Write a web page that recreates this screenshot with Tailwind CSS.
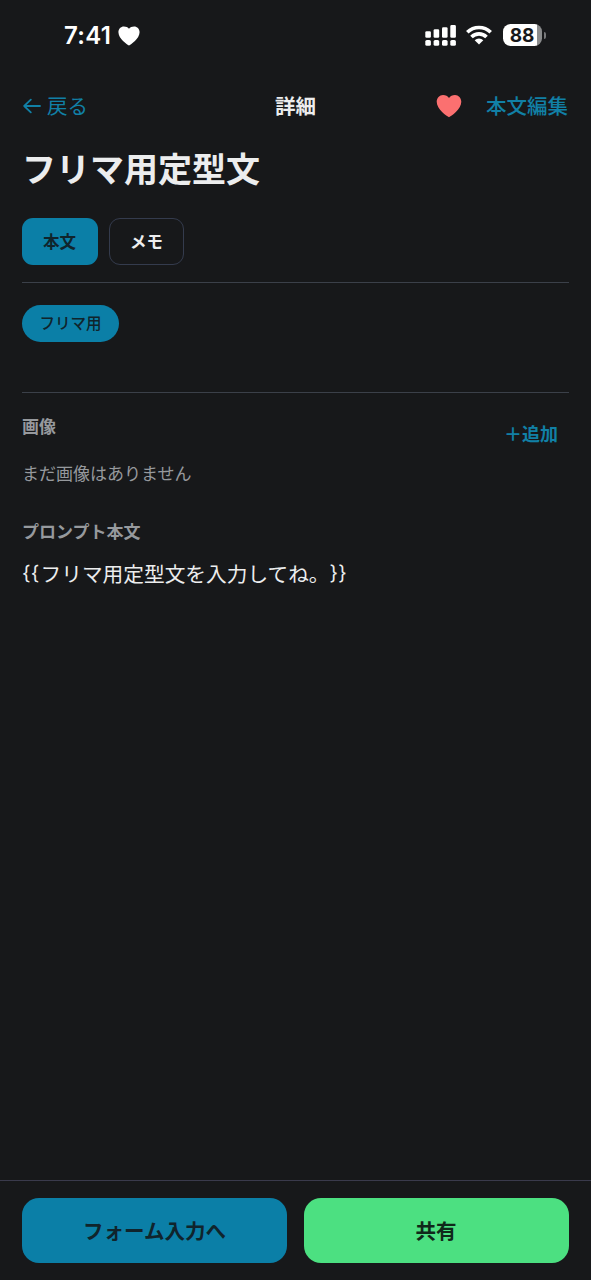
<!DOCTYPE html>
<html lang="ja">
<head>
<meta charset="utf-8">
<title>詳細</title>
<script src="https://cdn.jsdelivr.net/npm/@tailwindcss/browser@4"></script>
</head>
<body class="bg-[#17181a]">
<div class="flex h-[1280px] w-[591px] flex-col overflow-hidden whitespace-nowrap bg-[#17181a] font-['Noto_Sans_CJK_JP',sans-serif] text-[#ecedee] [text-spacing-trim:space-all]">
  <!-- status bar -->
  <div class="flex h-[70px] items-center pl-16 pr-[45px] text-white">
    <span class="w-[49px] pt-px font-['Inter',sans-serif] text-[24px] font-semibold leading-[70px] tracking-[0.3px]">7:41</span>
    <svg class="ml-[5px] mt-px h-[20px] w-[22px]" viewBox="0 0 21 20" preserveAspectRatio="none" fill="currentColor"><path d="M10.5 19.500C8.8 18.600.4 12.700.4 6.300.4 3 2.700.6 5.600.6c2.100 0 3.900.8 4.900 2.100 1-1.300 2.800-2.100 4.900-2.100 2.900 0 5.200 2.400 5.200 5.700 0 6.400-8.400 12.300-10.100 13.200z"/></svg>
    <div class="ml-auto flex items-center">
      <svg class="h-[21px] w-[31px]" viewBox="0 0 31 21" fill="currentColor">
        <rect x=".3" y="6.300" width="5.600" height="6.400" rx="1.300"/><rect x="8.600" y="4.300" width="5.600" height="8.400" rx="1.300"/><rect x="17" y="2.300" width="5.600" height="10.400" rx="1.300"/><rect x="25.300" y=".1" width="5.600" height="12.600" rx="1.300"/>
        <rect x=".3" y="15" width="5.600" height="5.800" rx="1.600"/><rect x="8.600" y="15" width="5.600" height="5.800" rx="1.600"/><rect x="17" y="15" width="5.600" height="5.800" rx="1.600"/><rect x="25.300" y="15" width="5.600" height="5.800" rx="1.600"/>
      </svg>
      <svg class="ml-[10px] h-[20px] w-[26px]" viewBox="0 0 26 20" fill="none" stroke="currentColor" stroke-width="3.600"><path d="M1.300 7.200a16.800 16.800 0 0 1 23.400 0M5.500 12a10.600 10.600 0 0 1 15 0"/><path d="M13 19.600l-4.300-4.300a6 6 0 0 1 8.600 0z" fill="currentColor" stroke="none"/></svg>
      <div class="ml-[11px] flex h-[22px] w-[39px] items-center justify-center rounded-[7.500px] bg-linear-to-r from-white from-[88%] to-[#8b8c8d] to-[88%] pr-px font-['Inter',sans-serif] text-[19px] font-bold leading-none text-[#17181a]">88</div>
      <div class="ml-[1.500px] h-[7px] w-[2.500px] rounded-r-full bg-[#77787a]"></div>
    </div>
  </div>
  <!-- navigation -->
  <div class="grid h-[72px] grid-cols-[1fr_auto_1fr] items-center px-[22px] pb-[2px] text-[20.5px] leading-[30px]">
    <div class="flex items-center text-[#1180a6]">
      <svg class="ml-px mr-[6px] mt-[2px] h-[16px] w-[18px]" viewBox="0 0 18 16" fill="none" stroke="currentColor" stroke-width="1.800" stroke-linecap="round" stroke-linejoin="round"><path d="M17 8H1.500M7.800 1.700L1.200 8l6.600 6.300"/></svg>
      <span>戻る</span>
    </div>
    <div class="font-bold">詳細</div>
    <div class="flex items-center justify-end pr-px text-[#1180a6]">
      <svg class="mr-[24px] mt-[2px] h-[24px] w-[26px] text-[#fb7070]" viewBox="0 0 26 24" fill="currentColor"><path d="M13 23.300C11 22.300.7 15.500.7 7.800.7 3.800 3.500.9 7 .9c2.600 0 4.800 1.100 6 3 1.200-1.900 3.400-3 6-3 3.500 0 6.300 2.900 6.300 6.900 0 7.700-10.300 14.500-12.300 15.500z"/></svg>
      <span class="font-medium">本文編集</span>
    </div>
  </div>
  <main class="flex flex-1 flex-col px-[22px]">
    <h1 class="h-[76px] text-[34px] font-bold leading-[52px]">フリマ用定型文</h1>
    <div class="flex h-[65px] gap-[11px] border-b border-[#3b4049] text-[16.500px] font-bold">
      <div class="flex h-[47px] w-[76px] items-center justify-center rounded-[11px] bg-[#0b7fa7] pr-px text-[#10242c]">本文</div>
      <div class="flex h-[47px] w-[75px] items-center justify-center rounded-[11px] border border-[#343b4d]">メモ</div>
    </div>
    <div class="h-[110px] border-b border-[#3b4049] pt-[22px]">
      <div class="flex h-[37px] w-[97px] items-center justify-center rounded-full bg-[#0b7fa7] pb-px text-[15.500px] font-medium text-[#10242c]">フリマ用</div>
    </div>
    <div class="flex h-[66px] justify-between pr-[11px]">
      <div class="pt-[20px] text-[17px] font-bold leading-[26px] text-[#96999d]">画像</div>
      <div class="pt-[27px] text-[18px] font-bold leading-[26px] text-[#1180a6]">＋追加</div>
    </div>
    <p class="h-[58px] pt-px text-[17px] leading-[26px] text-[#96999d]">まだ画像はありません</p>
    <h2 class="h-[41px] pt-px text-[17px] font-bold leading-[26px] text-[#96999d]">プロンプト本文</h2>
    <p class="flex text-[20.700px] leading-[30px]"><span class="w-[18.500px] font-['Inter',sans-serif] text-[20px] tracking-[0.3px]">{{</span>フリマ用定型文を入力してね。<span class="font-['Inter',sans-serif] text-[20px] tracking-[0.3px]">}}</span></p>
  </main>
  <footer class="grid h-[100px] grid-cols-2 gap-[17px] border-t border-[#3a3a4c] px-[22px] pt-[17px] text-[20.500px] font-bold">
    <div class="flex h-[65px] items-center justify-center rounded-[17px] bg-[#0b7fa7] pb-px text-[#10242c]">フォーム入力へ</div>
    <div class="flex h-[65px] items-center justify-center rounded-[17px] bg-[#4ce081] pb-px pr-px text-[#10281a]">共有</div>
  </footer>
</div>
</body>
</html>
